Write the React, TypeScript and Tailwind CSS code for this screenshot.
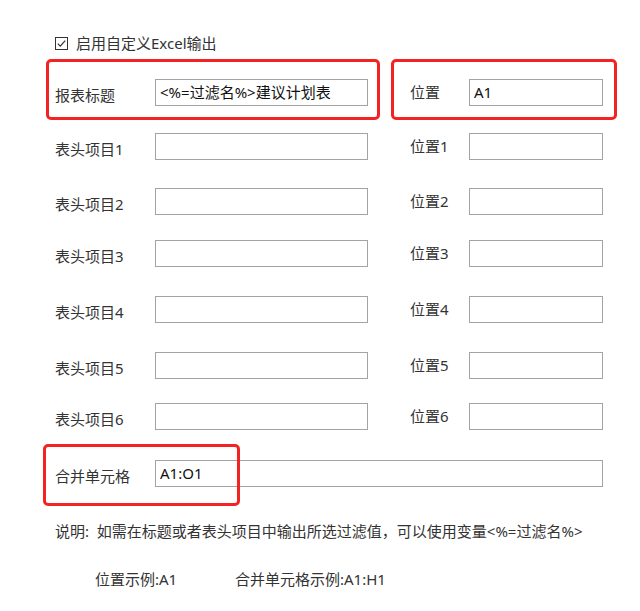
const FONT = "font-['Noto_Sans','Noto_Sans_CJK_SC',sans-serif]";

interface Row {
  left: string;
  right: string;
  mt: string;
}

const rows: Row[] = [
  { left: '表头项目1', right: '位置1', mt: 'mt-[27px]' },
  { left: '表头项目2', right: '位置2', mt: 'mt-[28px]' },
  { left: '表头项目3', right: '位置3', mt: 'mt-[25px]' },
  { left: '表头项目4', right: '位置4', mt: 'mt-[29px]' },
  { left: '表头项目5', right: '位置5', mt: 'mt-[29px]' },
  { left: '表头项目6', right: '位置6', mt: 'mt-[24px]' },
];

const Field = ({ value = '', className = '' }: { value?: string; className?: string }) => (
  <div className={`h-[27px] border border-[#a3a3a3] bg-white flex items-center px-[4px] text-[15px] text-[#111] ${className}`}>
    {value}
  </div>
);

const FormRow = ({ left, right, leftValue, rightValue, mt }: Row & { leftValue?: string; rightValue?: string }) => (
  <div className={`flex items-start h-[27px] ${mt}`}>
    <div className="w-[100px] pt-[6px] text-[15px] leading-[20px] text-[#333]">{left}</div>
    <Field value={leftValue} className="w-[213px]" />
    <div className="w-[42px]" />
    <div className="w-[59px] pt-[3px] text-[15px] leading-[20px] text-[#333]">{right}</div>
    <Field value={rightValue} className="w-[134px]" />
  </div>
);

export default function App() {
  return (
    <div className={`relative w-[640px] h-[611px] bg-white overflow-hidden pl-[55px] ${FONT}`}>
      {/* 复选框 */}
      <div className="mt-[33px] h-[20px] flex items-center gap-[8px] text-[15px] text-[#333]">
        <svg width="13" height="13" viewBox="0 0 13 13" className="shrink-0">
          <rect x="0.5" y="0.5" width="12" height="12" fill="white" stroke="#333" />
          <path d="M2.8 6.6 L5.3 9.1 L10.2 3.6" fill="none" stroke="#333" strokeWidth="1.2" />
        </svg>
        <span className="leading-[20px]">启用自定义Excel输出</span>
      </div>

      <FormRow left="报表标题" right="位置" leftValue="<%=过滤名%>建议计划表" rightValue="A1" mt="mt-[26px]" />
      {rows.map((r) => (
        <FormRow key={r.left} {...r} />
      ))}

      <div className="flex items-start h-[27px] mt-[30px]">
        <div className="w-[100px] pt-[6px] text-[15px] leading-[20px] text-[#333]">合并单元格</div>
        <Field value="A1:O1" className="w-[448px]" />
      </div>

      <div className="mt-[34px] text-[15px] leading-[20px] text-[#333] whitespace-nowrap">
        说明:&nbsp;&nbsp;如需在标题或者表头项目中输出所选过滤值，可以使用变量&lt;%=过滤名%&gt;
      </div>
      <div className="mt-[28px] flex text-[15px] leading-[20px] text-[#333] pl-[40px]">
        <span className="w-[140px]">位置示例:A1</span>
        <span>合并单元格示例:A1:H1</span>
      </div>

      {/* 红色标注框 */}
      <div className="absolute left-[46px] top-[59px] w-[334px] h-[61px] border-[3px] border-[#f42222] rounded-[5px]" />
      <div className="absolute left-[391px] top-[59px] w-[226px] h-[61px] border-[3px] border-[#f42222] rounded-[5px]" />
      <div className="absolute left-[43px] top-[444px] w-[197px] h-[62px] border-[3px] border-[#f42222] rounded-[5px]" />
    </div>
  );
}
